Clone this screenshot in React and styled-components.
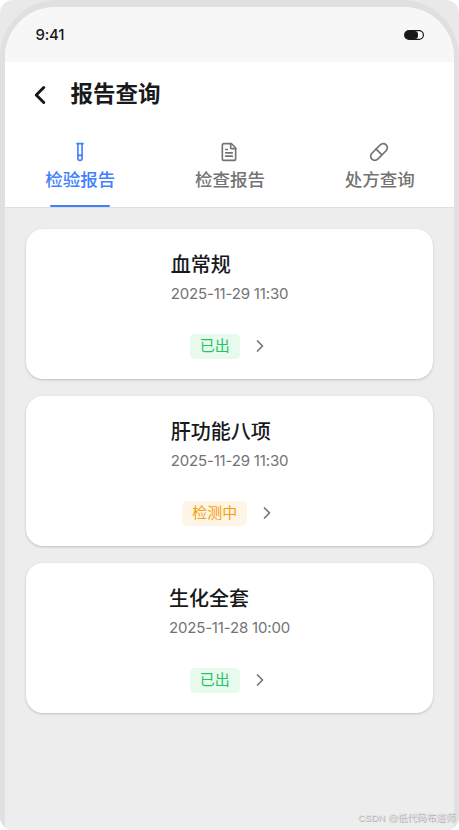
import React from 'react'
import styled, { createGlobalStyle, ThemeProvider } from 'styled-components'
import { ChevronLeft, ChevronRight, TestTube, FileText, Pill } from 'lucide-react'

const theme = {
  black: '#18191b',
  grey: '#737373',
  lightgrey: '#ededed',
  line: '#e0e0e0',
  blue: '#4080ff',
  green: '#22c55e',
  orange: '#f59e0b'
}

const GlobalStyle = createGlobalStyle`
  * {
    box-sizing: border-box;
  }
  body {
    margin: 0;
    background: white;
    font-family: Inter, 'Noto Sans CJK SC', sans-serif;
    overflow: hidden;
  }
  h1, h2, p {
    margin: 0;
  }
`

const Page = styled.div`
  position: relative;
  width: 459px;
  height: 830px;
  overflow: hidden;
  border-radius: 13px;
  background: #e9e9e9;
`

const Phone = styled.div`
  height: 890px;
  padding: 7px 5px 0;
  background: ${props => props.theme.line};
  border-radius: 57px 57px 0 0;
`

const Screen = styled.div`
  height: 100%;
  overflow: hidden;
  border-radius: 50px 50px 0 0;
  background: ${props => props.theme.lightgrey};
`

const StatusBar = styled.div`
  display: flex;
  justify-content: space-between;
  align-items: center;
  height: 55px;
  padding: 0 30px 0 30.5px;
  background: #f7f7f7;
  color: ${props => props.theme.black};
  font-size: 15px;
  font-weight: 450;
  letter-spacing: -0.2px;
`

const Header = styled.header`
  display: flex;
  align-items: center;
  gap: 15.5px;
  height: 65px;
  padding: 0 20px;
  background: white;
  color: ${props => props.theme.black};
  h1 {
    margin-bottom: 2px;
    font-size: 22.5px;
    font-weight: 600;
    line-height: 32px;
  }
`

const Tabs = styled.nav`
  display: grid;
  grid-template-columns: repeat(3, 1fr);
  height: 81px;
  background: white;
  border-bottom: 1px solid ${props => props.theme.line};
`

const Tab = styled.div`
  display: flex;
  flex-direction: column;
  align-items: center;
  padding-top: 15px;
  gap: 5px;
  color: ${props => (props.$active ? props.theme.blue : props.theme.grey)};
  font-size: 17.5px;
  font-weight: 500;
  line-height: 25px;
  span {
    padding-left: 1px;
  }
  &::after {
    content: '';
    width: 60px;
    height: 2px;
    margin-top: auto;
    border-radius: 1px;
    background: ${props => (props.$active ? props.theme.blue : 'transparent')};
  }
`

const List = styled.main`
  display: grid;
  gap: 17px;
  padding: 21px;
`

const Card = styled.article`
  display: flex;
  flex-direction: column;
  align-items: center;
  height: 150px;
  padding-top: 21px;
  background: white;
  border-radius: 17px;
  box-shadow: 0 1px 3px rgba(0, 0, 0, 0.14), 0 1px 2px rgba(0, 0, 0, 0.06);
  h2 {
    color: ${props => props.theme.black};
    font-size: 20px;
    font-weight: 500;
    line-height: 30px;
  }
  p {
    margin-top: 3px;
    color: ${props => props.theme.grey};
    font-size: 15px;
    line-height: 22px;
    letter-spacing: -0.17px;
  }
`

const Result = styled.div`
  display: flex;
  align-items: flex-start;
  gap: 10px;
  margin-top: 29px;
  padding-left: 0.4px;
  color: ${props => props.theme.grey};
  svg {
    margin-top: 2px;
  }
`

const Badge = styled.span`
  height: 25px;
  padding: 0 10px;
  border-radius: 5px;
  background: ${props => (props.$done ? '#e8f9ee' : '#fff5e6')};
  color: ${props => (props.$done ? props.theme.green : props.theme.orange)};
  font-size: 15px;
  line-height: 24px;
`

const Watermark = styled.div`
  position: absolute;
  right: 4px;
  bottom: 4px;
  color: #dedede;
  font-family: 'Liberation Sans', 'Noto Sans CJK SC', sans-serif;
  font-size: 9.6px;
  line-height: 16px;
  text-shadow: 1px 1px 0 #b0b0b0;
`

const tabs = [
  { name: '检验报告', Icon: TestTube },
  { name: '检查报告', Icon: FileText },
  { name: '处方查询', Icon: Pill }
]

const reports = [
  { name: '血常规', time: '2025-11-29 11:30', done: true },
  { name: '肝功能八项', time: '2025-11-29 11:30', done: false },
  { name: '生化全套', time: '2025-11-28 10:00', done: true }
]

const Battery = _ => (
  <svg width='20' height='10' viewBox='0 0 20 10'>
    <rect x='0.6' y='0.6' width='18.8' height='8.8' rx='4.4' fill='white' stroke='#18191b' strokeWidth='1.2' />
    <rect x='1' y='1' width='13' height='8' rx='3.5' fill='#18191b' />
  </svg>
)

const Report = ({ name, time, done }) => (
  <Card>
    <div>
      <h2>{name}</h2>
      <p>{time}</p>
    </div>
    <Result>
      <Badge $done={done}>{done ? '已出' : '检测中'}</Badge>
      <ChevronRight size={20} />
    </Result>
  </Card>
)

export default function App () {
  return (
    <ThemeProvider theme={theme}>
      <GlobalStyle />
      <Page>
        <Phone>
          <Screen>
            <StatusBar>
              <span>9:41</span>
              <Battery />
            </StatusBar>
            <Header>
              <ChevronLeft size={30} strokeWidth={2.4} />
              <h1>报告查询</h1>
            </Header>
            <Tabs>
              {tabs.map(({ name, Icon }, i) => (
                <Tab key={name} $active={i === 0}>
                  <Icon size={20} />
                  <span>{name}</span>
                </Tab>
              ))}
            </Tabs>
            <List>
              {reports.map(report => (
                <Report key={report.name} {...report} />
              ))}
            </List>
          </Screen>
        </Phone>
        <Watermark>CSDN @低代码布道师</Watermark>
      </Page>
    </ThemeProvider>
  )
}
